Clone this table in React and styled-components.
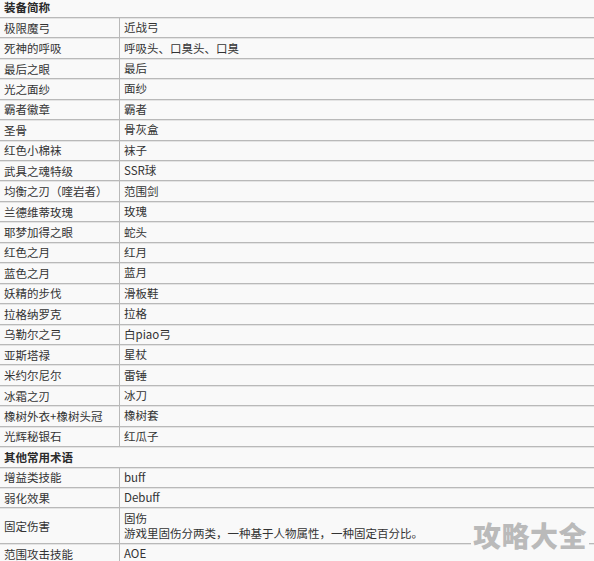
import React from 'react';
import styled, { createGlobalStyle } from 'styled-components';

const GlobalStyle = createGlobalStyle`
  html, body {
    margin: 0;
    padding: 0;
    background: #f9f9f9;
  }
  body {
    font-family: "Noto Sans CJK SC", "Noto Sans", sans-serif;
    color: #333;
  }
`;

const sections = [
  {
    title: '装备简称',
    rows: [
      ['极限魔弓', '近战弓'],
      ['死神的呼吸', '呼吸头、口臭头、口臭'],
      ['最后之眼', '最后'],
      ['光之面纱', '面纱'],
      ['霸者徽章', '霸者'],
      ['圣骨', '骨灰盒'],
      ['红色小棉袜', '袜子'],
      ['武具之魂特级', 'SSR球'],
      ['均衡之刃（喹岩者）', '范围剑'],
      ['兰德维蒂玫瑰', '玫瑰'],
      ['耶梦加得之眼', '蛇头'],
      ['红色之月', '红月'],
      ['蓝色之月', '蓝月'],
      ['妖精的步伐', '滑板鞋'],
      ['拉格纳罗克', '拉格'],
      ['乌勒尔之弓', '白piao弓'],
      ['亚斯塔禄', '星杖'],
      ['米约尔尼尔', '雷锤'],
      ['冰霜之刃', '冰刀'],
      ['橡树外衣+橡树头冠', '橡树套'],
      ['光辉秘银石', '红瓜子'],
    ],
  },
  {
    title: '其他常用术语',
    rows: [
      ['增益类技能', 'buff'],
      ['弱化效果', 'Debuff'],
      ['固定伤害', ['固伤', '游戏里固伤分两类，一种基于人物属性，一种固定百分比。']],
      ['范围攻击技能', 'AOE'],
    ],
  },
];

const Page = styled.div`
  position: relative;
  width: 594px;
  height: 561px;
  overflow: hidden;
`;

const Table = styled.div`
  display: flex;
  flex-direction: column;
  margin-top: -2.5px;
  font-size: 11.5px;
`;

const Row = styled.div`
  display: flex;
  box-sizing: border-box;
  height: ${p => (p.$tall ? '35.7px' : '20.45px')};
  border-bottom: 1px solid #b9b9b9;
  box-shadow: 0 1px 0 #e4e4e4;
`;

const SectionTitle = styled(Row)`
  align-items: center;
  padding-left: 4px;
  font-weight: 700;
  color: #2a2a2a;
`;

const Name = styled.div`
  box-sizing: border-box;
  width: 120px;
  flex-shrink: 0;
  padding-left: 4px;
  display: flex;
  align-items: center;
  border-right: 1px solid #b9b9b9;
  white-space: nowrap;
`;

const Value = styled.div`
  flex: 1;
  padding-left: 4px;
  display: flex;
  flex-direction: column;
  justify-content: center;
  line-height: 15px;
  white-space: nowrap;
`;

const Watermark = styled.span`
  position: absolute;
  right: 5px;
  top: 520px;
  padding: 0 2px;
  font-size: 28px;
  line-height: 30px;
  font-weight: 900;
  color: #bababa;
  background: #f9f9f9;
  letter-spacing: 0.5px;
`;

export default function App() {
  return (
    <>
      <GlobalStyle />
      <Page>
        <Table>
          {sections.map(section => (
            <React.Fragment key={section.title}>
              <SectionTitle>{section.title}</SectionTitle>
              {section.rows.map(([name, value]) => {
                const lines = Array.isArray(value) ? value : [value];
                return (
                  <Row key={name} $tall={lines.length > 1}>
                    <Name>{name}</Name>
                    <Value>
                      {lines.map(line => (
                        <span key={line}>{line}</span>
                      ))}
                    </Value>
                  </Row>
                );
              })}
            </React.Fragment>
          ))}
        </Table>
        <Watermark>攻略大全</Watermark>
      </Page>
    </>
  );
}
